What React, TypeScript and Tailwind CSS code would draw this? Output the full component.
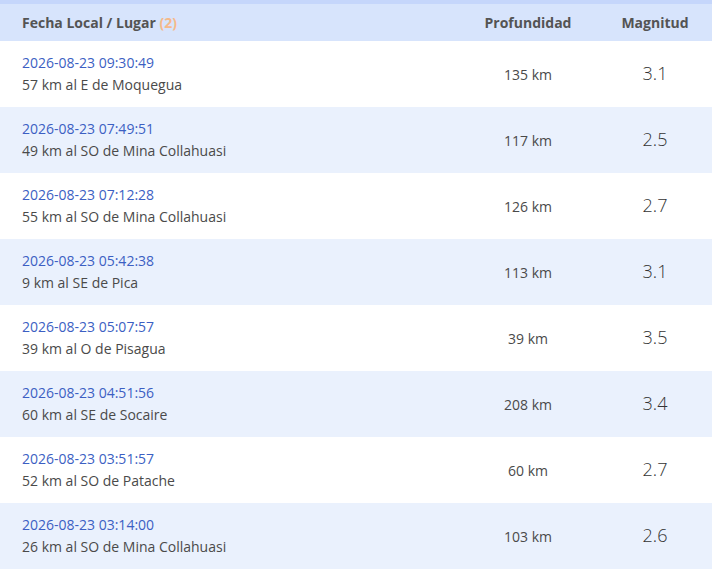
import React from 'react';

const rows = [
  { date: '2026-08-23 09:30:49', place: '57 km al E de Moquegua', depth: '135 km', mag: '3.1' },
  { date: '2026-08-23 07:49:51', place: '49 km al SO de Mina Collahuasi', depth: '117 km', mag: '2.5' },
  { date: '2026-08-23 07:12:28', place: '55 km al SO de Mina Collahuasi', depth: '126 km', mag: '2.7' },
  { date: '2026-08-23 05:42:38', place: '9 km al SE de Pica', depth: '113 km', mag: '3.1' },
  { date: '2026-08-23 05:07:57', place: '39 km al O de Pisagua', depth: '39 km', mag: '3.5' },
  { date: '2026-08-23 04:51:56', place: '60 km al SE de Socaire', depth: '208 km', mag: '3.4' },
  { date: '2026-08-23 03:51:57', place: '52 km al SO de Patache', depth: '60 km', mag: '2.7' },
  { date: '2026-08-23 03:14:00', place: '26 km al SO de Mina Collahuasi', depth: '103 km', mag: '2.6' },
];

export default function App() {
  return (
    <div className="min-h-[573px] bg-white font-['Open_Sans',sans-serif]">
      <div className="h-[4px] bg-[#c5d6fb]" />
      <div className="grid h-[37px] grid-cols-[1fr_140px_114px] items-center bg-[#d7e4fc] text-[14px] font-bold text-[#545454]">
        <div className="pl-[22px]">
          Fecha Local / Lugar <span className="text-[#f5b98a]">(2)</span>
        </div>
        <div className="text-center">Profundidad</div>
        <div className="text-center">Magnitud</div>
      </div>
      {rows.map((r, i) => (
        <div
          key={i}
          className={`grid h-[66px] grid-cols-[1fr_140px_114px] items-center ${i % 2 ? 'bg-[#eaf1fd]' : 'bg-white'}`}
        >
          <div className="pl-[22px] pb-[1px] text-[14px] leading-[22px]">
            <div className="text-[#3c5fc3]">{r.date}</div>
            <div className="text-[#4a4a4a]">{r.place}</div>
          </div>
          <div className="text-center text-[14px] text-[#4a4a4a]">{r.depth}</div>
          <div className="pb-[2px] text-center text-[18px] font-light text-[#333]">{r.mag}</div>
        </div>
      ))}
    </div>
  );
}
